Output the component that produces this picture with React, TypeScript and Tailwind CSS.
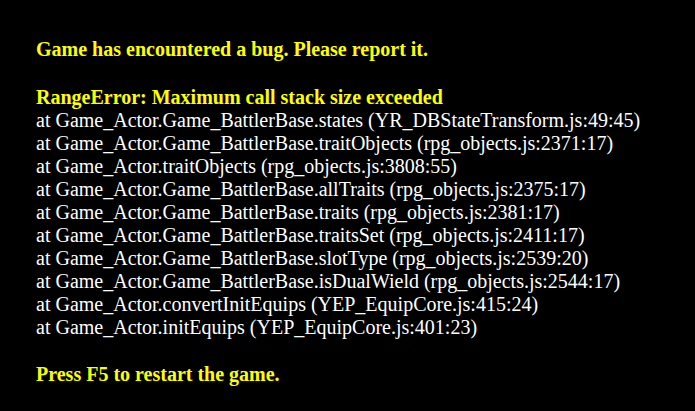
const stack = [
  'at Game_Actor.Game_BattlerBase.states (YR_DBStateTransform.js:49:45)',
  'at Game_Actor.Game_BattlerBase.traitObjects (rpg_objects.js:2371:17)',
  'at Game_Actor.traitObjects (rpg_objects.js:3808:55)',
  'at Game_Actor.Game_BattlerBase.allTraits (rpg_objects.js:2375:17)',
  'at Game_Actor.Game_BattlerBase.traits (rpg_objects.js:2381:17)',
  'at Game_Actor.Game_BattlerBase.traitsSet (rpg_objects.js:2411:17)',
  'at Game_Actor.Game_BattlerBase.slotType (rpg_objects.js:2539:20)',
  'at Game_Actor.Game_BattlerBase.isDualWield (rpg_objects.js:2544:17)',
  'at Game_Actor.convertInitEquips (YEP_EquipCore.js:415:24)',
  'at Game_Actor.initEquips (YEP_EquipCore.js:401:23)',
];

export default function App() {
  return (
    <div className="w-[695px] h-[411px] bg-black overflow-hidden pl-[36px] pt-[38px] font-['Liberation_Serif',serif] text-[20px] leading-[23px]">
      <div className="text-[#ffff00] font-bold">Game has encountered a bug. Please report it.</div>
      <div className="h-[25px]" />
      <div className="text-[#ffff00] font-bold">RangeError: Maximum call stack size exceeded</div>
      <div className="text-white">
        {stack.map((line, i) => (
          <div key={i}>{line}</div>
        ))}
      </div>
      <div className="h-[24px]" />
      <div className="text-[#ffff00] font-bold">Press F5 to restart the game.</div>
    </div>
  );
}
